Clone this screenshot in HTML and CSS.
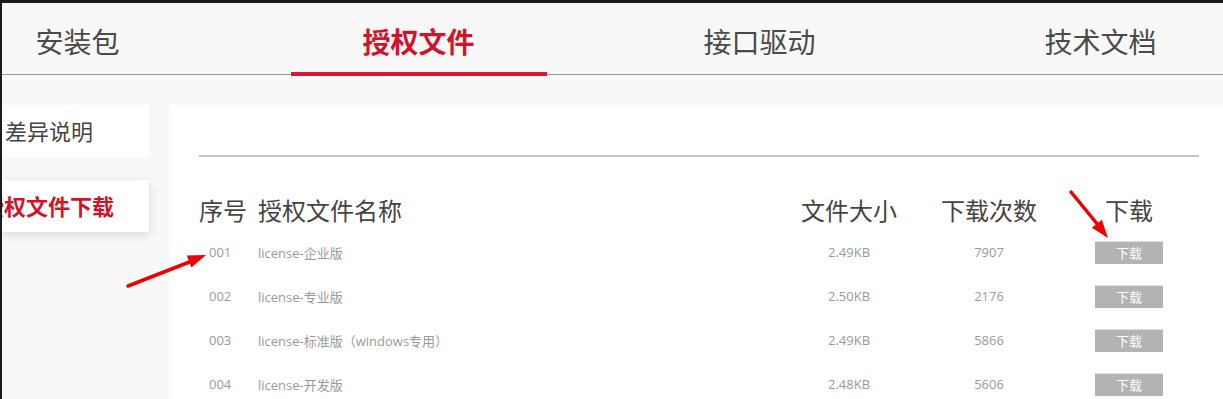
FILE: index.html
```html
<!DOCTYPE html>
<html lang="zh-CN">
<head>
<meta charset="utf-8">
<title>授权文件下载</title>
<link rel="stylesheet" href="styles.css">
</head>
<body>
<nav class="tabs">
  <div class="tab">安装包</div>
  <div class="tab active">授权文件</div>
  <div class="tab">接口驱动</div>
  <div class="tab">技术文档</div>
</nav>
<div class="page">
  <aside class="side">
    <div class="side-item">差异说明</div>
    <div class="side-item current"><span class="shift">授权文件下载</span></div>
  </aside>
  <main class="panel">
    <div class="rule"></div>
    <div class="table">
      <div class="th c1">序号</div>
      <div class="th c2">授权文件名称</div>
      <div class="th c3">文件大小</div>
      <div class="th c4">下载次数</div>
      <div class="th c5">下载</div>

      <div class="td c1 num">001</div>
      <div class="td c2">license-企业版</div>
      <div class="td c3">2.49KB</div>
      <div class="td c4">7907</div>
      <div class="td c5"><span class="btn">下载</span></div>

      <div class="td c1 num">002</div>
      <div class="td c2">license-专业版</div>
      <div class="td c3">2.50KB</div>
      <div class="td c4">2176</div>
      <div class="td c5"><span class="btn">下载</span></div>

      <div class="td c1 num">003</div>
      <div class="td c2">license-标准版（windows专用）</div>
      <div class="td c3">2.49KB</div>
      <div class="td c4">5866</div>
      <div class="td c5"><span class="btn">下载</span></div>

      <div class="td c1 num">004</div>
      <div class="td c2">license-开发版</div>
      <div class="td c3">2.48KB</div>
      <div class="td c4">5606</div>
      <div class="td c5"><span class="btn">下载</span></div>
    </div>
  </main>
</div>
<svg class="arrows" width="1223" height="399" viewBox="0 0 1223 399" aria-hidden="true">
  <line x1="128" y1="286" x2="192" y2="261" stroke="#ee0000" stroke-width="3.5" stroke-linecap="round"/>
  <polygon points="206,255 191.4,267.6 186.8,255.4" fill="#ee0000"/>
  <line x1="1071" y1="192" x2="1098" y2="225" stroke="#ee0000" stroke-width="3.5" stroke-linecap="round"/>
  <polygon points="1108,238 1091.8,227.8 1101.8,219.8" fill="#ee0000"/>
</svg>
</body>
</html>
```

FILE: styles.css
```css
html, body {
  margin: 0;
  padding: 0;
}
body {
  background: #f8f8f8;
  border-top: 3px solid #1b1b1b;
  border-left: 2px solid #1b1b1b;
  min-height: 396px;
  overflow: hidden;
  font-family: "Noto Sans CJK SC", "Noto Sans", sans-serif;
  color: #444;
  position: relative;
}
.tabs {
  display: flex;
  margin-left: -95px;
  height: 71px;
  border-bottom: 1px solid #9a9a9a;
  width: 1400px;
}
.tab {
  flex: 0 0 341px;
  height: 71px;
  box-sizing: border-box;
  padding-top: 5px;
  display: flex;
  align-items: center;
  justify-content: center;
  font-size: 28px;
  color: #4a4a4a;
  position: relative;
}
.tab.active {
  color: #d0142c;
  font-weight: bold;
}
.tab.active::after {
  content: "";
  position: absolute;
  left: 42.5px;
  right: 42.5px;
  bottom: -2px;
  height: 4px;
  background: #d51a33;
}
.page {
  display: flex;
  margin-top: 30px;
  align-items: flex-start;
}
.side {
  flex: 0 0 147px;
  display: flex;
  flex-direction: column;
  gap: 22px;
}
.side-item {
  height: 53px;
  box-sizing: border-box;
  padding-bottom: 3px;
  background: #fff;
  display: flex;
  align-items: center;
  padding-left: 3px;
  font-size: 22px;
  color: #444;
  overflow: hidden;
  white-space: nowrap;
}
.side-item.current {
  height: 52px;
  padding-bottom: 2px;
  color: #d0142c;
  font-weight: bold;
  box-shadow: 0 3px 10px rgba(0, 0, 0, 0.13);
  padding-left: 0;
}
.shift {
  margin-left: -20px;
}
.panel {
  margin-left: 20px;
  flex: 1;
  background: #fff;
  height: 300px;
  padding-left: 30px;
}
.rule {
  width: 1000px;
  height: 2px;
  background: #c6c6c6;
  margin-top: 50px;
}
.table {
  display: grid;
  width: 1000px;
  grid-template-columns: 59px 521px 140px 140px 140px;
  grid-template-rows: 42px;
  grid-auto-rows: 44px;
  margin-top: 31px;
  align-items: center;
}
.th {
  font-size: 24px;
  color: #444;
  white-space: nowrap;
}
.td {
  font-size: 13px;
  color: #9a9a9a;
  font-family: "Open Sans", "Noto Sans CJK SC", sans-serif;
  white-space: nowrap;
}
.c1.num {
  padding-left: 10px;
}
.c3, .c4, .c5 {
  text-align: center;
}
.c5.td {
  display: flex;
  justify-content: center;
}
.btn {
  display: inline-block;
  width: 68px;
  height: 23px;
  line-height: 22px;
  background: #b3b3b3;
  border-top: 1px solid #e0e0e0;
  box-sizing: border-box;
  color: #fff;
  font-size: 13px;
  font-family: "Noto Sans CJK SC", sans-serif;
  text-align: center;
}
.arrows {
  position: absolute;
  left: -2px;
  top: -3px;
  pointer-events: none;
}
```
